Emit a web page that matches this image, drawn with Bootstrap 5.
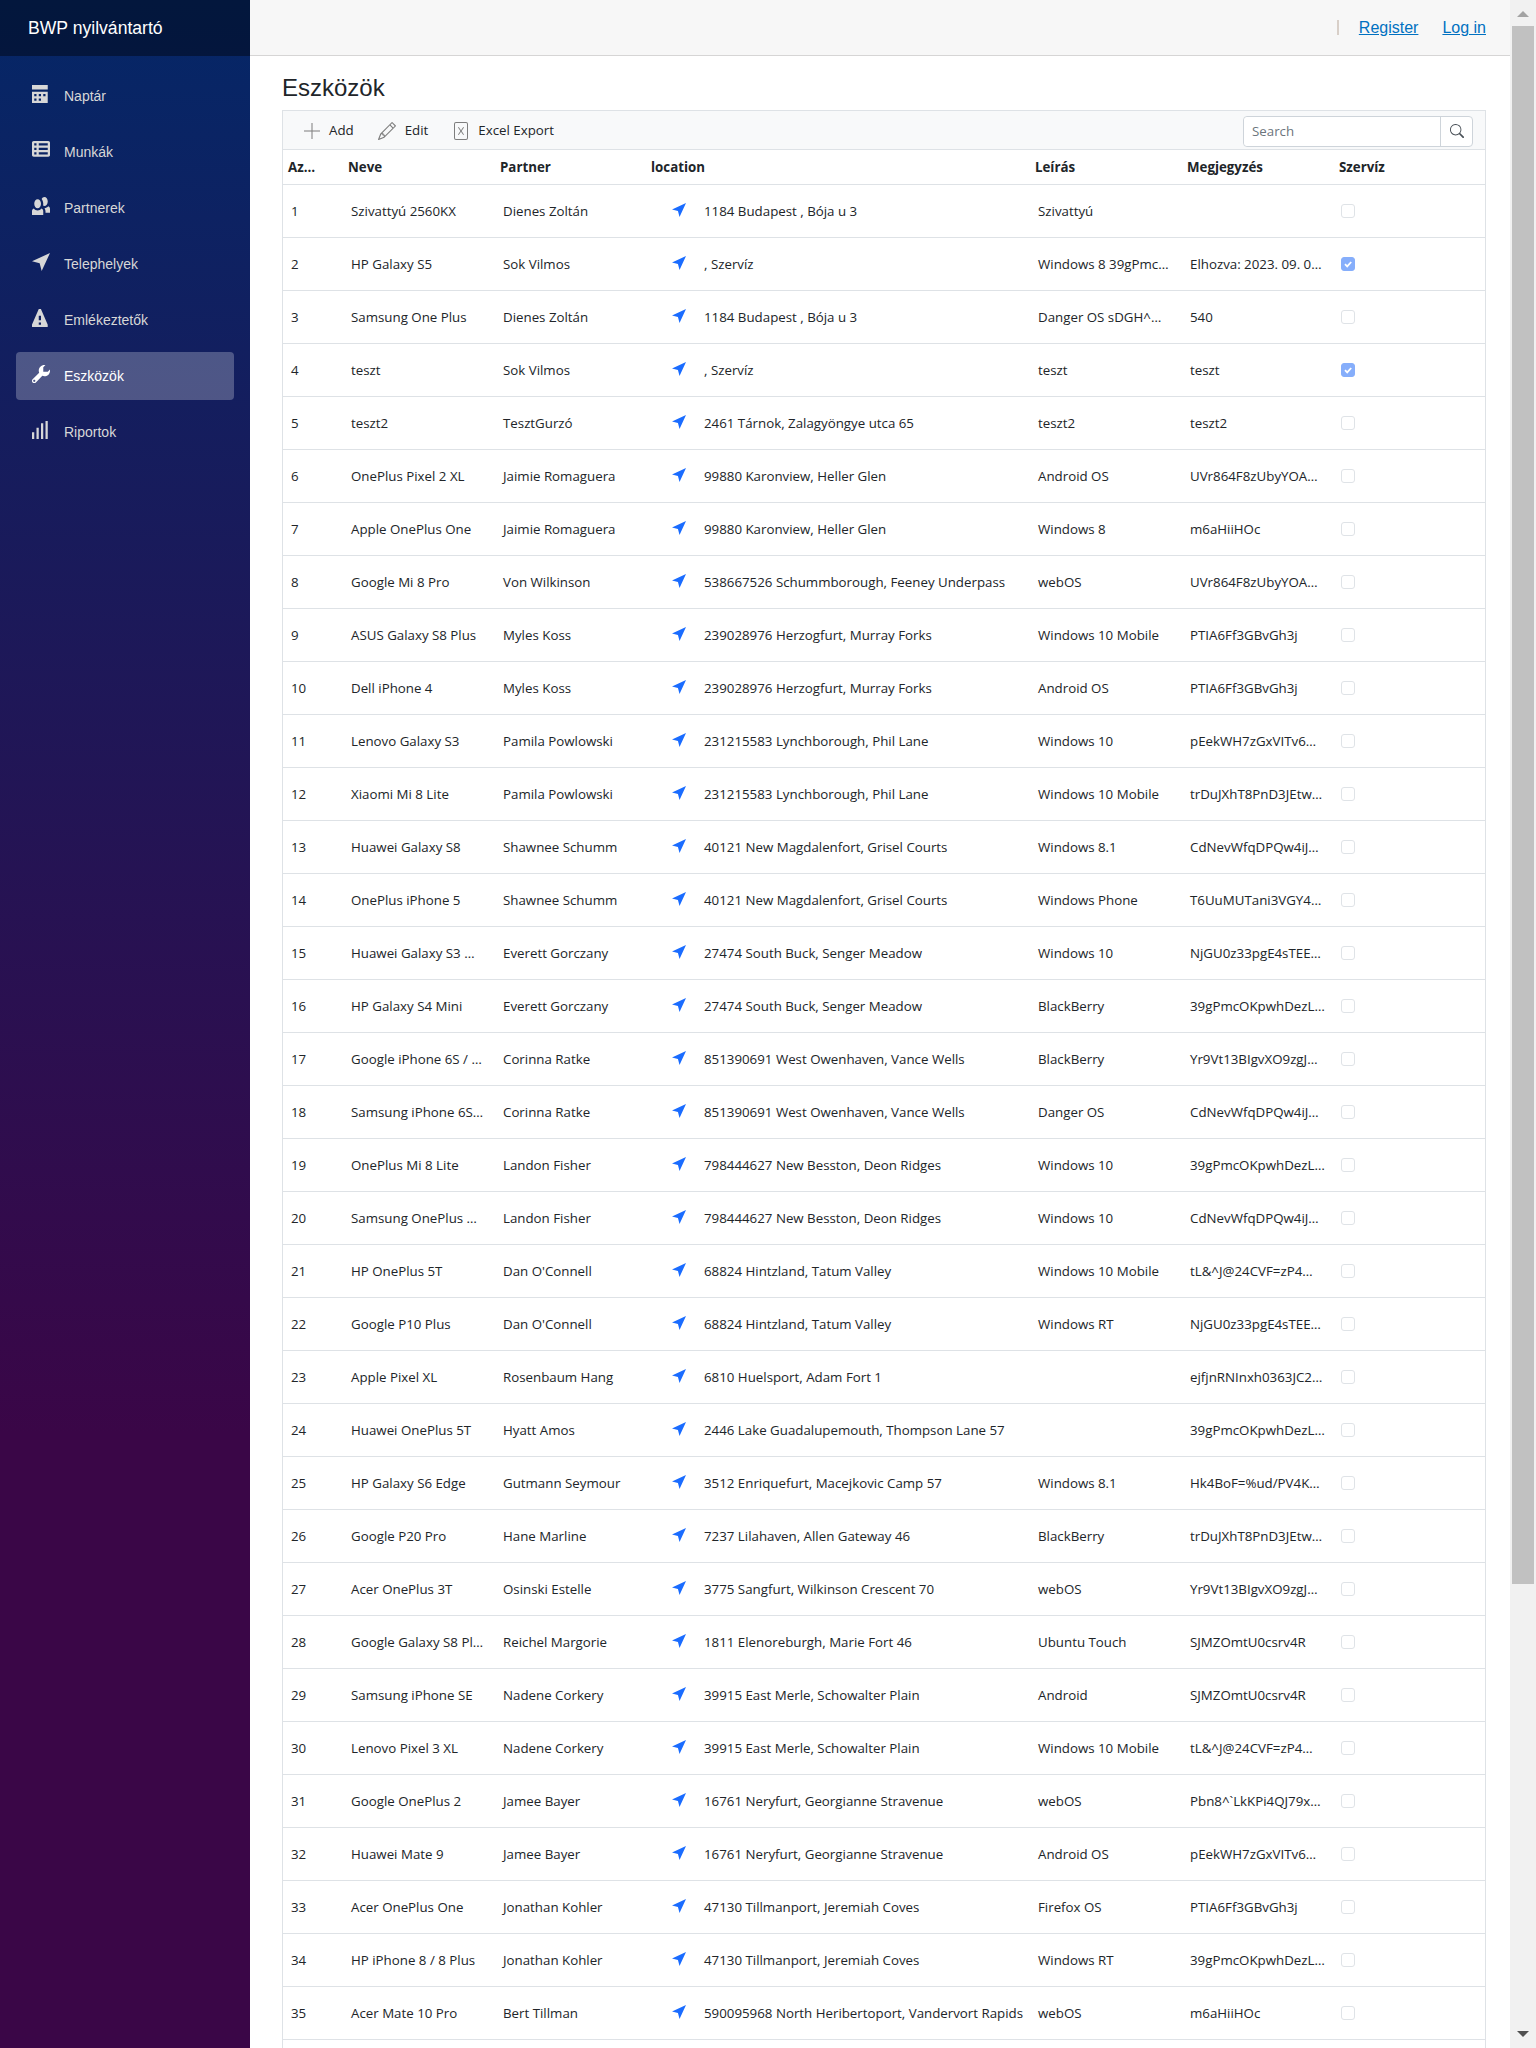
<!DOCTYPE html>
<html lang="en">
  <head>
    <meta charset="UTF-8" />
    <meta name="viewport" content="width=device-width, initial-scale=1.0" />
    <title>Eszközök</title>
    <link href="https://cdn.jsdelivr.net/npm/bootstrap@5.3.3/dist/css/bootstrap.min.css" rel="stylesheet" />
    <style>
      html, body { height: 100%; overflow: hidden; }
      body { font-family: "Liberation Sans", Arial, sans-serif; }
      .app-shell { height: 2048px; }

      /* sidebar */
      .side-panel { width: 250px; background-image: linear-gradient(180deg, rgb(5, 39, 103) 0%, #3a0647 70%); }
      .side-brand { height: 56px; background: rgba(0, 0, 0, .4); padding-left: 28px; color: #fff; font-size: 17.6px; }
      .side-nav { padding: 16px 16px 0; gap: 8px; }
      .side-link { height: 48px; padding-left: 16px; gap: 14px; border-radius: 4px; color: #d7d7d7; font-size: 14px; text-decoration: none; }
      .side-link svg { width: 18px; height: 18px; fill: currentColor; margin-top: -4px; }
      .side-link.is-current { background: rgba(255, 255, 255, .25); color: #fff; }

      /* top bar */
      .page-column { width: 1260px; }
      .top-strip { height: 56px; background: #f7f7f7; border-bottom: 1px solid #d6d5d5; padding-right: 24px; font-size: 16px; }
      .top-strip a { color: #0071c1; margin-left: 24px; }
      .strip-sep { width: 2px; height: 15px; background: #d8cfc8; margin-right: -4px; }

      /* grid */
      .page-body { padding: 0 24px 0 32px; }
      .page-title { font-size: 24px; font-weight: 400; margin: 18px 0 9px; line-height: 27px; color: #212529; }
      .grid-box { min-height: 1950px; border: solid #dee2e6; border-width: 1px 1px 0; font-family: "Open Sans", sans-serif; font-size: 13.3px; color: #212529; }
      .grid-tools { height: 39px; background: #f8f9fa; border-bottom: 1px solid #dee2e6; padding: 2px 12px 0 21px; }
      .tool-btn { gap: 9px; margin-right: 24px; }
      .tool-btn + .tool-btn + .tool-btn { margin-left: 2px; gap: 10px; }
      .tool-btn svg { fill: #7d7d7d; }
      .search-box { width: 230px; height: 31px; border: 1px solid #ced4da; border-radius: 4px; background: #fff; }
      .search-box input { border: 0; outline: 0; min-width: 0; flex: 1; padding: 2px 8px 0; font-size: 13.3px; border-radius: 4px; }
      .search-box input::placeholder { color: #6c757d; }
      .search-btn { width: 32px; border-left: 1px solid #ced4da; }

      .grid-table { table-layout: fixed; width: 1203px; margin: 0; }
      .grid-table th { height: 34px; padding: 2px 4px 0; font-weight: 700; vertical-align: middle; border-bottom: 1px solid #dee2e6; }
      .grid-table th:first-child { padding-left: 5px; }
      .grid-table td { height: 53px; padding: 2px 4px 0 7px; vertical-align: middle; border-bottom: 1px solid #dee2e6; white-space: nowrap; overflow: hidden; }
      .grid-table td.id-cell { padding-left: 8px; }
      .grid-table td.loc-cell { padding-left: 25px; }
      .grid-table td.svc-cell { padding: 0 0 0 6px; }
      .loc-icon { width: 14px; height: 14px; fill: #1a6cff; margin-right: 18px; vertical-align: -1px; }
      .svc-check { display: block; width: 14px; height: 14px; border: 1px solid #dfe3e7; border-radius: 3px; }
      .svc-check.is-on { background: #86aefb; border-color: #86aefb; }
      .svc-check svg { display: block; width: 12px; height: 12px; }

      /* the page's scrollbar */
      .fake-scroll { width: 26px; background: #f1f1f1; }
      .fake-thumb { position: absolute; left: 2px; right: 2px; top: 26px; height: 1558px; background: #c1c1c1; }
      .scroll-up, .scroll-down { position: absolute; left: 7px; width: 0; height: 0; border-left: 6px solid transparent; border-right: 6px solid transparent; }
      .scroll-up { top: 11px; border-bottom: 6px solid #a3a3a3; }
      .scroll-down { bottom: 11px; border-top: 6px solid #505050; }
    </style>
  </head>
  <body>
    <div class="app-shell d-flex">
      <aside class="side-panel flex-shrink-0">
        <div class="side-brand d-flex align-items-center">BWP nyilvántartó</div>
        <nav class="side-nav d-flex flex-column">
          <a class="side-link d-flex align-items-center" href="#"><svg viewBox="0 0 8 8"><path d="M0 0v2h7v-2h-7zm0 3v4.91c0 .05.04.09.09.09h6.81c.05 0 .09-.04.09-.09v-4.91h-7.01zm1 1h1v1h-1v-1zm2 0h1v1h-1v-1zm2 0h1v1h-1v-1zm-4 2h1v1h-1v-1zm2 0h1v1h-1v-1z" /></svg>Naptár</a>
          <a class="side-link d-flex align-items-center" href="#"><svg viewBox="0 0 8 8"><path d="M.75 0c-.41 0-.75.34-.75.75v5.5c0 .41.34.75.75.75h6.5c.41 0 .75-.34.75-.75v-5.5c0-.41-.34-.75-.75-.75h-6.5zm.25 1h1v1h-1v-1zm2 0h4v1h-4v-1zm-2 2h1v1h-1v-1zm2 0h4v1h-4v-1zm-2 2h1v1h-1v-1zm2 0h4v1h-4v-1z" /></svg>Munkák</a>
          <a class="side-link d-flex align-items-center" href="#"><svg viewBox="0 0 8 8"><path d="M5.5 0c-.51 0-.95.35-1.22.88.45.54.72 1.28.72 2.13 0 .29-.03.55-.09.81.19.11.38.19.59.19.83 0 1.5-.9 1.5-2s-.67-2-1.5-2zm-3 1c-.83 0-1.5.9-1.5 2s.67 2 1.5 2 1.5-.9 1.5-2-.67-2-1.5-2zm4.75 3.16c-.43.51-1.02.82-1.69.84.27.38.44.84.44 1.34v.66h2v-1.66c0-.52-.31-.97-.75-1.19zm-6.5 1c-.44.22-.75.67-.75 1.19v1.66h5v-1.66c0-.52-.31-.97-.75-1.19-.45.53-1.06.84-1.75.84s-1.3-.32-1.75-.84z" /></svg>Partnerek</a>
          <a class="side-link d-flex align-items-center" href="#"><svg viewBox="0 0 8 8"><path d="M8 0 0 3.700 3.400 4.600 4.300 8z" /></svg>Telephelyek</a>
          <a class="side-link d-flex align-items-center" href="#"><svg viewBox="0 0 8 8"><path d="M3.09 0c-.06 0-.1.04-.13.09l-2.94 6.81c-.02.05-.03.13-.03.19v.81c0 .05.04.09.09.09h6.81c.05 0 .09-.04.09-.09v-.81c0-.05-.01-.14-.03-.19l-2.94-6.81c-.02-.05-.07-.09-.13-.09h-.81zm-.09 3h1v2h-1v-2zm0 3h1v1h-1v-1z" /></svg>Emlékeztetők</a>
          <a class="side-link is-current d-flex align-items-center" href="#"><svg viewBox="0 0 8 8"><path d="M5.5 0c-1.38 0-2.5 1.12-2.5 2.5 0 .32.08.62.19.91l-2.91 2.88c-.39.39-.39 1.05 0 1.44.2.2.46.28.72.28.26 0 .52-.09.72-.28l2.88-2.91c.28.11.58.19.91.19 1.38 0 2.5-1.12 2.5-2.5 0-.16 0-.32-.03-.47l-.97.97h-2v-2l.97-.97c-.15-.03-.31-.03-.47-.03zm-4.5 6.5c.28 0 .5.22.5.5s-.22.5-.5.5-.5-.22-.5-.5.22-.5.5-.5z" /></svg>Eszközök</a>
          <a class="side-link d-flex align-items-center" href="#"><svg viewBox="0 0 8 8"><path d="M6 0v8h1v-8h-1zm-2 1v7h1v-7h-1zm-2 2v5h1v-5h-1zm-2 2v3h1v-3h-1z" /></svg>Riportok</a>
        </nav>
      </aside>

      <div class="page-column flex-shrink-0">
        <header class="top-strip d-flex align-items-center justify-content-end">
          <span class="strip-sep"></span>
          <a href="#">Register</a>
          <a href="#">Log in</a>
        </header>
        <main class="page-body">
          <h1 class="page-title">Eszközök</h1>
          <div class="grid-box">
            <div class="grid-tools d-flex align-items-center">
              <span class="tool-btn d-flex align-items-center">
                <svg width="16" height="16" viewBox="0 0 16 16"><path d="M7.5 0h1v7.5H16v1H8.5V16h-1V8.5H0v-1h7.5z" /></svg>Add
              </span>
              <span class="tool-btn d-flex align-items-center">
                <svg width="18" height="18" viewBox="0 0 16 16"><path d="M12.146.146a.5.5 0 0 1 .708 0l3 3a.5.5 0 0 1 0 .708l-10 10a.5.5 0 0 1-.168.11l-5 2a.5.5 0 0 1-.65-.65l2-5a.5.5 0 0 1 .11-.168l10-10zM11.207 2.5 13.5 4.793 14.793 3.5 12.5 1.207 11.207 2.5zm1.586 3L10.5 3.207 4 9.707V10h.5a.5.5 0 0 1 .5.5v.5h.5a.5.5 0 0 1 .5.5v.5h.293l6.5-6.5zm-9.761 5.175-.106.106-1.528 3.821 3.821-1.528.106-.106A.5.5 0 0 1 5 12.5V12h-.5a.5.5 0 0 1-.5-.5V11h-.5a.5.5 0 0 1-.468-.325z" /></svg>Edit
              </span>
              <span class="tool-btn d-flex align-items-center">
                <svg width="14" height="18" viewBox="0 0 14 18"><path fill-rule="evenodd" d="M2 0h10a2 2 0 0 1 2 2v14a2 2 0 0 1-2 2H2a2 2 0 0 1-2-2V2a2 2 0 0 1 2-2zm0 1a1 1 0 0 0-1 1v14a1 1 0 0 0 1 1h10a1 1 0 0 0 1-1V2a1 1 0 0 0-1-1zm2 4.500.7-.5L7 8.200 9.300 5l.7.500L7.600 9 10 12.500l-.7.500L7 9.800 4.700 13l-.7-.5L6.400 9z" /></svg>Excel Export
              </span>
              <div class="search-box d-flex ms-auto">
                <input type="text" placeholder="Search" aria-label="Search" />
                <span class="search-btn d-flex align-items-center justify-content-center">
                  <svg width="14" height="14" viewBox="0 0 16 16" fill="#495057"><path d="M11.742 10.344a6.5 6.5 0 1 0-1.397 1.398h-.001c.03.04.062.078.098.115l3.85 3.85a1 1 0 0 0 1.415-1.414l-3.85-3.85a1.007 1.007 0 0 0-.115-.1zM12 6.5a5.500 5.500 0 1 1-11 0 5.500 5.500 0 0 1 11 0z" /></svg>
                </span>
              </div>
            </div>
            <table class="grid-table">
              <colgroup>
                <col width="61" /><col width="152" /><col width="151" /><col width="384" /><col width="152" /><col width="152" /><col width="151" />
              </colgroup>
              <thead>
                <tr><th>Az…</th><th>Neve</th><th>Partner</th><th>location</th><th>Leírás</th><th>Megjegyzés</th><th>Szervíz</th></tr>
              </thead>
              <tbody id="rows"></tbody>
            </table>
          </div>
        </main>
      </div>

      <div class="fake-scroll position-relative flex-shrink-0">
        <span class="scroll-up"></span>
        <span class="fake-thumb"></span>
        <span class="scroll-down"></span>
      </div>
    </div>

    <script>
      // name, partner, address, description, note, service
      const devices = [
        ["Szivattyú 2560KX", "Dienes Zoltán", "1184 Budapest , Bója u 3", "Szivattyú", "", false],
        ["HP Galaxy S5", "Sok Vilmos", ", Szervíz", "Windows 8 39gPmc…", "Elhozva: 2023. 09. 0…", true],
        ["Samsung One Plus", "Dienes Zoltán", "1184 Budapest , Bója u 3", "Danger OS sDGH^…", "540", false],
        ["teszt", "Sok Vilmos", ", Szervíz", "teszt", "teszt", true],
        ["teszt2", "TesztGurzó", "2461 Tárnok, Zalagyöngye utca 65", "teszt2", "teszt2", false],
        ["OnePlus Pixel 2 XL", "Jaimie Romaguera", "99880 Karonview, Heller Glen", "Android OS", "UVr864F8zUbyYOA…", false],
        ["Apple OnePlus One", "Jaimie Romaguera", "99880 Karonview, Heller Glen", "Windows 8", "m6aHiiHOc", false],
        ["Google Mi 8 Pro", "Von Wilkinson", "538667526 Schummborough, Feeney Underpass", "webOS", "UVr864F8zUbyYOA…", false],
        ["ASUS Galaxy S8 Plus", "Myles Koss", "239028976 Herzogfurt, Murray Forks", "Windows 10 Mobile", "PTIA6Ff3GBvGh3j", false],
        ["Dell iPhone 4", "Myles Koss", "239028976 Herzogfurt, Murray Forks", "Android OS", "PTIA6Ff3GBvGh3j", false],
        ["Lenovo Galaxy S3", "Pamila Powlowski", "231215583 Lynchborough, Phil Lane", "Windows 10", "pEekWH7zGxVITv6…", false],
        ["Xiaomi Mi 8 Lite", "Pamila Powlowski", "231215583 Lynchborough, Phil Lane", "Windows 10 Mobile", "trDuJXhT8PnD3JEtw…", false],
        ["Huawei Galaxy S8", "Shawnee Schumm", "40121 New Magdalenfort, Grisel Courts", "Windows 8.1", "CdNevWfqDPQw4iJ…", false],
        ["OnePlus iPhone 5", "Shawnee Schumm", "40121 New Magdalenfort, Grisel Courts", "Windows Phone", "T6UuMUTani3VGY4…", false],
        ["Huawei Galaxy S3 …", "Everett Gorczany", "27474 South Buck, Senger Meadow", "Windows 10", "NjGU0z33pgE4sTEE…", false],
        ["HP Galaxy S4 Mini", "Everett Gorczany", "27474 South Buck, Senger Meadow", "BlackBerry", "39gPmcOKpwhDezL…", false],
        ["Google iPhone 6S / …", "Corinna Ratke", "851390691 West Owenhaven, Vance Wells", "BlackBerry", "Yr9Vt13BIgvXO9zgJ…", false],
        ["Samsung iPhone 6S…", "Corinna Ratke", "851390691 West Owenhaven, Vance Wells", "Danger OS", "CdNevWfqDPQw4iJ…", false],
        ["OnePlus Mi 8 Lite", "Landon Fisher", "798444627 New Besston, Deon Ridges", "Windows 10", "39gPmcOKpwhDezL…", false],
        ["Samsung OnePlus …", "Landon Fisher", "798444627 New Besston, Deon Ridges", "Windows 10", "CdNevWfqDPQw4iJ…", false],
        ["HP OnePlus 5T", "Dan O'Connell", "68824 Hintzland, Tatum Valley", "Windows 10 Mobile", "tL&^J@24CVF=zP4…", false],
        ["Google P10 Plus", "Dan O'Connell", "68824 Hintzland, Tatum Valley", "Windows RT", "NjGU0z33pgE4sTEE…", false],
        ["Apple Pixel XL", "Rosenbaum Hang", "6810 Huelsport, Adam Fort 1", "", "ejfjnRNInxh0363JC2…", false],
        ["Huawei OnePlus 5T", "Hyatt Amos", "2446 Lake Guadalupemouth, Thompson Lane 57", "", "39gPmcOKpwhDezL…", false],
        ["HP Galaxy S6 Edge", "Gutmann Seymour", "3512 Enriquefurt, Macejkovic Camp 57", "Windows 8.1", "Hk4BoF=%ud/PV4K…", false],
        ["Google P20 Pro", "Hane Marline", "7237 Lilahaven, Allen Gateway 46", "BlackBerry", "trDuJXhT8PnD3JEtw…", false],
        ["Acer OnePlus 3T", "Osinski Estelle", "3775 Sangfurt, Wilkinson Crescent 70", "webOS", "Yr9Vt13BIgvXO9zgJ…", false],
        ["Google Galaxy S8 Pl…", "Reichel Margorie", "1811 Elenoreburgh, Marie Fort 46", "Ubuntu Touch", "SJMZOmtU0csrv4R", false],
        ["Samsung iPhone SE", "Nadene Corkery", "39915 East Merle, Schowalter Plain", "Android", "SJMZOmtU0csrv4R", false],
        ["Lenovo Pixel 3 XL", "Nadene Corkery", "39915 East Merle, Schowalter Plain", "Windows 10 Mobile", "tL&^J@24CVF=zP4…", false],
        ["Google OnePlus 2", "Jamee Bayer", "16761 Neryfurt, Georgianne Stravenue", "webOS", "Pbn8^`LkKPi4QJ79x…", false],
        ["Huawei Mate 9", "Jamee Bayer", "16761 Neryfurt, Georgianne Stravenue", "Android OS", "pEekWH7zGxVITv6…", false],
        ["Acer OnePlus One", "Jonathan Kohler", "47130 Tillmanport, Jeremiah Coves", "Firefox OS", "PTIA6Ff3GBvGh3j", false],
        ["HP iPhone 8 / 8 Plus", "Jonathan Kohler", "47130 Tillmanport, Jeremiah Coves", "Windows RT", "39gPmcOKpwhDezL…", false],
        ["Acer Mate 10 Pro", "Bert Tillman", "590095968 North Heribertoport, Vandervort Rapids", "webOS", "m6aHiiHOc", false],
      ];

      const tbody = document.getElementById("rows");
      const checkMark = '<svg viewBox="0 0 12 12"><path d="M3 6.200 5.200 8.400 9.200 4" fill="none" stroke="#fff" stroke-width="1.800" /></svg>';

      devices.forEach(function (d, i) {
        const row = document.createElement("tr");
        [i + 1, d[0], d[1], d[2], d[3], d[4]].forEach(function (value, col) {
          const cell = document.createElement("td");
          if (col === 0) cell.className = "id-cell";
          if (col === 3) {
            cell.className = "loc-cell";
            cell.innerHTML = '<svg class="loc-icon" viewBox="0 0 8 8"><path d="M8 0 0 3.700 3.400 4.600 4.300 8z" /></svg>';
          }
          cell.append(value);
          row.append(cell);
        });
        const svc = document.createElement("td");
        svc.className = "svc-cell";
        svc.innerHTML = '<span class="svc-check' + (d[5] ? " is-on" : "") + '">' + (d[5] ? checkMark : "") + "</span>";
        row.append(svc);
        tbody.append(row);
      });
    </script>
    <script src="https://cdn.jsdelivr.net/npm/bootstrap@5.3.3/dist/js/bootstrap.bundle.min.js"></script>
  </body>
</html>
